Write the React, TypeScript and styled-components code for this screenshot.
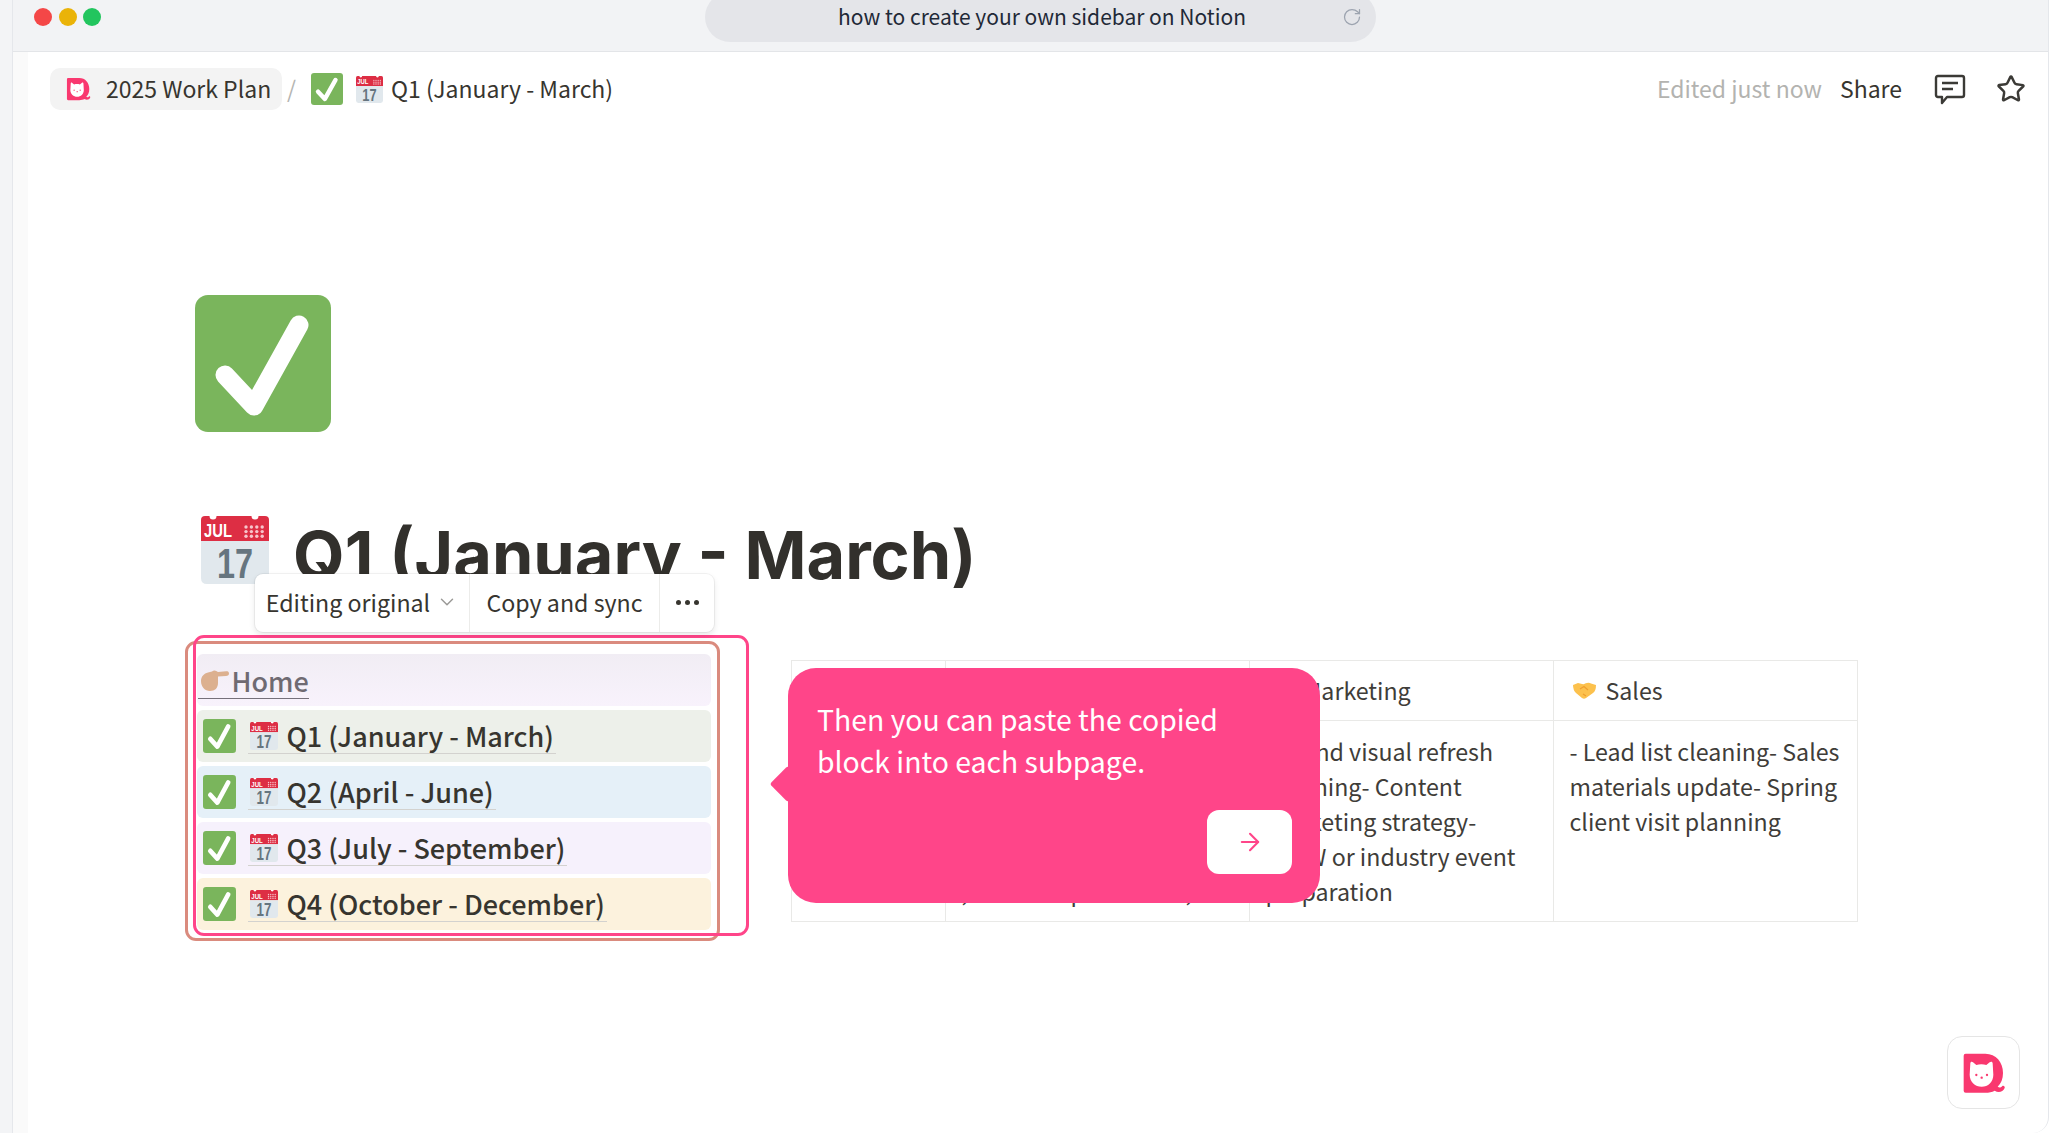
import React from "react";
import styled, { createGlobalStyle } from "styled-components";
import { ArrowRight, ChevronDown, RotateCw, Star } from "lucide-react";

const Global = createGlobalStyle`
  html, body { margin: 0; padding: 0; background: #fff; }
  * { box-sizing: border-box; }
  body { font-family: "Noto Sans CJK SC", "Noto Sans", sans-serif; color: #37352f; }
`;

const Shell = styled.div`
  position: relative;
  width: 2052px;
  height: 1133px;
  overflow: hidden;
  display: flex;
  background: #fff;
`;
const Gutter = styled.div`
  width: 12px;
  flex: none;
  background: #f3f4f6;
`;
const Win = styled.div`
  flex: 1;
  margin-right: 3px;
  display: flex;
  flex-direction: column;
  border-left: 1px solid #e5e7eb;
  border-right: 1px solid #e5e7eb;
  border-bottom-right-radius: 16px;
  background: #fff;
  min-width: 0;
`;
const TopBar = styled.div`
  height: 52px;
  flex: none;
  display: flex;
  background: #f2f3f5;
  border-bottom: 1px solid #e3e5e8;
  padding-left: 21px;
`;
const Lights = styled.div`
  display: flex;
  gap: 6.5px;
  height: 34px;
  align-items: center;
`;
const Light = styled.span<{ $c: string }>`
  width: 18px;
  height: 18px;
  border-radius: 50%;
  background: ${(p) => p.$c};
`;
const UrlPill = styled.div`
  margin-left: 604px;
  margin-top: -8px;
  width: 671px;
  height: 50px;
  border-radius: 25px;
  background: #e4e5e9;
  display: flex;
  align-items: center;
  position: relative;
  padding: 0 14px 0 133px;
  justify-content: space-between;
  font-size: 21px;
  color: #1f2937;
  svg { color: #9ca3af; }
`;
const UrlText = styled.span`
  padding-bottom: 2px;
`;
const Body = styled.div`
  flex: 1;
  display: flex;
  min-height: 0;
`;
const Strip = styled.div`
  width: 15px;
  flex: none;
  background: #fafafa;
`;
const Page = styled.div`
  flex: 1;
  display: flex;
  flex-direction: column;
  min-width: 0;
`;
const Header = styled.div`
  display: flex;
  align-items: center;
  justify-content: space-between;
  padding: 16px 22px 0 22px;
  height: 58px;
  flex: none;
`;
const Crumbs = styled.div`
  display: flex;
  align-items: center;
  font-size: 23px;
  color: #37352f;
`;
const CrumbPill = styled.div`
  display: flex;
  align-items: center;
  gap: 15px;
  height: 42px;
  width: 232px;
  padding-left: 16px;
  border-radius: 10px;
  background: #f3f3f3;
`;
const HeaderText = styled.span`
  padding-bottom: 2px;
`;
const Slash = styled.span`
  color: #b5b5b2;
  margin: 0 15px 0 5px;
  padding-bottom: 2px;
`;
const CrumbCurrent = styled.div`
  display: flex;
  align-items: center;
  gap: 8px;
`;
const CrumbCheck = styled.span`
  display: flex;
  margin-right: 5px;
`;
const Actions = styled.div`
  display: flex;
  align-items: center;
  font-size: 23px;
`;
const Edited = styled(HeaderText)`
  color: #b3b3b0;
  margin-right: 18px;
`;
const ShareText = styled(HeaderText)`
  margin-right: 32px;
`;
const ActionIcon = styled.span`
  display: flex;
  margin-right: 30px;
  &:last-child { margin-right: 0; }
`;
const Content = styled.div`
  padding-left: 167px;
  display: flex;
  flex-direction: column;
  align-items: flex-start;
`;
const BigIcon = styled.div`
  margin-top: 185px;
  width: 136px;
  height: 137px;
  display: flex;
`;
const TitleRow = styled.div`
  margin-top: 84px;
  margin-left: 6px;
  display: flex;
  align-items: flex-start;
  gap: 24px;
  height: 70px;
`;
const TitleClip = styled.div`
  height: 70px;
`;
const Title = styled.h1`
  margin: -7px 0 0 0;
  font-family: "Inter", "Noto Sans", sans-serif;
  font-size: 66.6px;
  line-height: 92px;
  font-weight: 700;
  color: #32302c;
  white-space: nowrap;
`;
const Columns = styled.div`
  margin-top: 68px;
  margin-left: 1.5px;
  display: flex;
  align-items: flex-start;
  gap: 80px;
`;
const LinkList = styled.div`
  width: 514px;
  display: flex;
  flex-direction: column;
  gap: 4px;
`;
const LinkRow = styled.div<{ $bg: string }>`
  height: 52px;
  border-radius: 6px;
  background: ${(p) => p.$bg};
  display: flex;
  align-items: center;
  padding-left: 6px;
  font-size: 27px;
  font-weight: 500;
  color: #37352f;
`;
const HomeRow = styled(LinkRow)`
  background: linear-gradient(#f1edf4, #f8f2fc);
  padding-left: 1px;
  color: #6f6a72;
`;
const HomeLink = styled.span`
  display: flex;
  align-items: center;
  gap: 3px;
  padding: 0 0 0 3px;
  height: 36px;
  margin-top: 2px;
  border-bottom: 1px solid #75707a;
`;
const RowCheck = styled.span`
  width: 33px;
  height: 34px;
  display: flex;
  flex: none;
`;
const RowLink = styled.span`
  margin-left: 12px;
  height: 36px;
  display: flex;
  align-items: center;
  gap: 9px;
  padding: 0 2px 0 2px;
  border-bottom: 1px solid #d3d2cf;
  white-space: nowrap;
`;
const Table = styled.div`
  margin-top: 6px;
  width: 1067px;
  height: 262px;
  border: 1px solid #e9e9e7;
  display: grid;
  grid-template-columns: 154px 304px 304px 1fr;
  grid-template-rows: 60px 1fr;
  font-size: 23.2px;
  line-height: 35px;
  color: #3f3d39;
`;
const Cell = styled.div`
  border-right: 1px solid #e9e9e7;
  padding: 13px 14px 0 16px;
  overflow: hidden;
  &:nth-child(4n) { border-right: none; }
`;
const HeadCell = styled(Cell)`
  border-bottom: 1px solid #e9e9e7;
  display: flex;
  align-items: center;
  gap: 10px;
  padding-top: 0;
  padding-left: 19px;
`;
const HeadSpacer = styled.span`
  width: 24px;
  flex: none;
`;
const Line = styled.div`
  white-space: nowrap;
`;
const Outline = styled.div<{ $x: number; $y: number; $w: number; $h: number; $c: string }>`
  position: absolute;
  left: ${(p) => p.$x}px;
  top: ${(p) => p.$y}px;
  width: ${(p) => p.$w}px;
  height: ${(p) => p.$h}px;
  border: 3.5px solid ${(p) => p.$c};
  border-radius: 11px;
  pointer-events: none;
`;
const Toolbar = styled.div`
  position: absolute;
  left: 255px;
  top: 574px;
  width: 459px;
  height: 58px;
  display: flex;
  align-items: center;
  background: #fff;
  border-radius: 8px;
  box-shadow: 0 0 0 1px rgba(15, 15, 15, 0.05), 0 3px 6px rgba(15, 15, 15, 0.1);
  font-size: 23.2px;
  color: #37352f;
`;
const ToolItem = styled.div<{ $w: number }>`
  width: ${(p) => p.$w}px;
  height: 100%;
  display: flex;
  align-items: center;
  justify-content: center;
  gap: 6px;
  padding-bottom: 2px;
  border-right: 1px solid #ececea;
  &:last-child { border-right: none; }
  svg { color: #9b9a97; }
`;
const Dots = styled.span`
  display: flex;
  gap: 4px;
  i { width: 5px; height: 5px; border-radius: 50%; background: #37352f; }
`;
const Tip = styled.div`
  position: absolute;
  left: 788px;
  top: 668px;
  width: 532px;
  height: 235px;
  border-radius: 28px;
  background: #ff4589;
  color: #fff;
  padding: 30px 29px;
  font-size: 28.4px;
  line-height: 42px;
  &::before {
    content: "";
    position: absolute;
    left: -13px;
    top: 103px;
    width: 26px;
    height: 26px;
    border-radius: 3px;
    background: #ff4589;
    transform: rotate(45deg);
  }
`;
const TipButton = styled.div`
  position: absolute;
  right: 28px;
  bottom: 29px;
  width: 85px;
  height: 64px;
  border-radius: 12px;
  background: #fff;
  display: flex;
  align-items: center;
  justify-content: center;
  color: #ff4589;
`;
const FloatButton = styled.div`
  position: absolute;
  left: 1947px;
  top: 1036px;
  width: 73px;
  height: 73px;
  border-radius: 15px;
  background: #fff;
  border: 1px solid #e5e5e5;
  display: flex;
  align-items: center;
  justify-content: center;
`;

const Check = ({ size, h }: { size: number; h?: number }) => (
  <svg width={size} height={h ?? size} viewBox="0 0 136 137" preserveAspectRatio="none">
    <rect width="136" height="137" rx="13" fill="#7ab55c" />
    <path d="M30 80 L59 111 L104 30" fill="none" stroke="#fff" strokeWidth="19" strokeLinecap="round" strokeLinejoin="round" />
  </svg>
);

const Calendar = ({ size }: { size: number }) => (
  <svg width={size} height={size} viewBox="0 0 68 68">
    <path d="M0 25 V4 Q0 0 4 0 H64 Q68 0 68 4 V25 Z" fill="#dd2e44" />
    <path d="M0 25 H68 V62 Q68 68 62 68 H6 Q0 68 0 62 Z" fill="#e1e8ed" />
    <circle cx="12" cy="0" r="3.5" fill="#fff" />
    <circle cx="54" cy="0" r="3.5" fill="#fff" />
    <text x="3" y="21" textLength="28" lengthAdjust="spacingAndGlyphs" fontFamily="'Liberation Sans', sans-serif" fontWeight="700" fontSize="19" fill="#fff">JUL</text>
    {[0, 1, 2].map((r) =>
      [0, 1, 2, 3].map((c) => <circle key={`${r}${c}`} cx={45 + c * 5.4} cy={11 + r * 4.6} r="1.7" fill="#f7c5cc" />)
    )}
    <text x="16" y="62" textLength="36" lengthAdjust="spacingAndGlyphs" fontFamily="'Liberation Sans', sans-serif" fontWeight="700" fontSize="43" fill="#66757f">17</text>
  </svg>
);

const Logo = ({ w, h }: { w: number; h: number }) => (
  <svg width={w} height={h} viewBox="122 122 132 126">
    <path d="M127 133 Q127 127 133 127 H192 C224 127 245 152 245 185 C245 203 239 217 229 226 C234 230 239 229 243 224 C246 221 252 225 250 230 C245 241 232 246 220 238 C212 242 203 244 192 244 H133 Q127 244 127 238 Z" fill="#f9386f" />
    <path d="M147 156 C147 151 152 150 155 153 L165 161 C174 158 186 158 195 161 L205 153 C209 150 214 151 214 156 L216 190 C216 212 200 226 181 226 C162 226 145 212 145 190 Z" fill="#fff" />
    <circle cx="165" cy="191" r="3.5" fill="#f9386f" />
    <circle cx="197" cy="191" r="3.5" fill="#f9386f" />
    <circle cx="181" cy="199" r="3.5" fill="#f9386f" />
  </svg>
);

const Hand = () => (
  <svg width="28" height="21" viewBox="0 0 28 21">
    <path d="M28 3.5 C28 1.5 26.5 1 25 1.2 L17 2 C15 0.5 13 0 11 1.5 L7 2.5 C3 3.5 0 6.5 0 11 C0 17 4 21 9 21 C14 21 17 18 17 13 L17 6.5 L25 6 C27 5.8 28 5 28 3.5 Z" fill="#dcb08f" />
  </svg>
);

const Handshake = () => (
  <svg width="23" height="17" viewBox="0 0 23 17">
    <path d="M0 3 L5 1 Q11 3 12 1.5 Q16 0 18 1.5 L23 3 Q23 9 20 11 L13 16 Q11 17.5 9 16 L3 11 Q0 8 0 3 Z" fill="#fcc14d" />
    <path d="M7 7 L11 4.5 L15 8 M10 12 L13 14" fill="none" stroke="#ee9f2f" strokeWidth="1.2" />
  </svg>
);

const Comment = () => (
  <svg width="32" height="31" viewBox="0 0 32 31" fill="none" stroke="#3b3a36" strokeWidth="2.4" strokeLinejoin="round">
    <path d="M4 2 H28 Q30 2 30 4 V21 Q30 23 28 23 H13 L8 29 V23 H4 Q2 23 2 21 V4 Q2 2 4 2 Z" />
    <path d="M8 9 H24 M8 15 H19" />
  </svg>
);

const rows = [
  { t: "Q1 (January - March)", bg: "#edf0ea" },
  { t: "Q2 (April - June)", bg: "#e5f0f8" },
  { t: "Q3 (July - September)", bg: "#f6f1fc" },
  { t: "Q4 (October - December)", bg: "#fcf2dd" },
];

export default function App() {
  return (
    <Shell>
      <Global />
      <Gutter />
      <Win>
        <TopBar>
          <Lights>
            <Light $c="#f44747" />
            <Light $c="#eab308" />
            <Light $c="#22c55e" />
          </Lights>
          <UrlPill>
            <UrlText>how to create your own sidebar on Notion</UrlText>
            <RotateCw size={20} strokeWidth={1.5} />
          </UrlPill>
        </TopBar>
        <Body>
          <Strip />
          <Page>
            <Header>
              <Crumbs>
                <CrumbPill>
                  <Logo w={25} h={24} />
                  <HeaderText>2025 Work Plan</HeaderText>
                </CrumbPill>
                <Slash>/</Slash>
                <CrumbCurrent>
                  <CrumbCheck><Check size={32} h={32} /></CrumbCheck>
                  <Calendar size={27} />
                  <HeaderText>Q1 (January - March)</HeaderText>
                </CrumbCurrent>
              </Crumbs>
              <Actions>
                <Edited>Edited just now</Edited>
                <ShareText>Share</ShareText>
                <ActionIcon><Comment /></ActionIcon>
                <ActionIcon><Star size={30} strokeWidth={2} color="#3b3a36" /></ActionIcon>
              </Actions>
            </Header>
            <Content>
              <BigIcon><Check size={136} h={137} /></BigIcon>
              <TitleRow>
                <Calendar size={68} />
                <TitleClip><Title>Q1 (January - March)</Title></TitleClip>
              </TitleRow>
              <Columns>
                <LinkList>
                  <HomeRow $bg="#f6f0fa">
                    <HomeLink><Hand />Home</HomeLink>
                  </HomeRow>
                  {rows.map((r) => (
                    <LinkRow key={r.t} $bg={r.bg}>
                      <RowCheck><Check size={33} h={34} /></RowCheck>
                      <RowLink><Calendar size={28} />{r.t}</RowLink>
                    </LinkRow>
                  ))}
                </LinkList>
                <Table>
                  <HeadCell>Month</HeadCell>
                  <HeadCell>Product</HeadCell>
                  <HeadCell><HeadSpacer />Marketing</HeadCell>
                  <HeadCell><Handshake />Sales</HeadCell>
                  <Cell />
                  <Cell>
                    <Line>- Roadmap review</Line>
                    <Line>- Feature backlog</Line>
                    <Line>- Bug triage</Line>
                    <Line>- Release notes</Line>
                    <Line>, add-on updates too,</Line>
                  </Cell>
                  <Cell>
                    <Line>- Brand visual refresh</Line>
                    <Line>planning- Content</Line>
                    <Line>marketing strategy-</Line>
                    <Line>SXSW or industry event</Line>
                    <Line>preparation</Line>
                  </Cell>
                  <Cell>
                    <Line>- Lead list cleaning- Sales</Line>
                    <Line>materials update- Spring</Line>
                    <Line>client visit planning</Line>
                  </Cell>
                </Table>
              </Columns>
            </Content>
          </Page>
        </Body>
      </Win>
      <Outline $x={185} $y={641} $w={535} $h={300} $c="#da8b7e" />
      <Outline $x={193} $y={635} $w={556} $h={301} $c="#ff4589" />
      <Toolbar>
        <ToolItem $w={215}>Editing original<ChevronDown size={22} strokeWidth={1.6} /></ToolItem>
        <ToolItem $w={190}>Copy and sync</ToolItem>
        <ToolItem $w={54}><Dots><i /><i /><i /></Dots></ToolItem>
      </Toolbar>
      <Tip>
        Then you can paste the copied
        <br />
        block into each subpage.
        <TipButton><ArrowRight size={28} strokeWidth={1.8} /></TipButton>
      </Tip>
      <FloatButton><Logo w={44} h={42} /></FloatButton>
    </Shell>
  );
}
